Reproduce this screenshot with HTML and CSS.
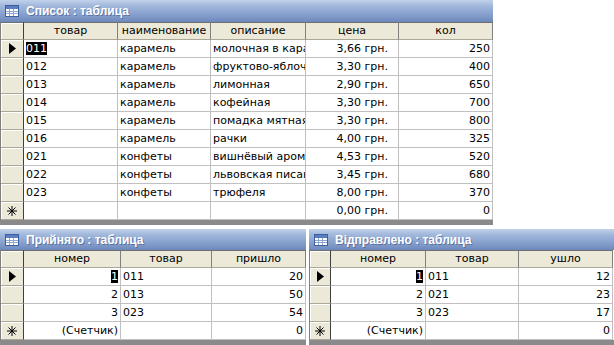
FILE: index.html
```html
<!DOCTYPE html>
<html lang="ru">
<head>
    <meta charset="UTF-8">
    <title>Таблицы</title>
    <link rel="stylesheet" href="styles.css">
</head>
<body>
    <div class="desk">
        <!-- Список -->
        <div class="win win-main">
            <div class="titlebar">
                <svg class="ticon" width="14" height="12" viewBox="0 0 14 12">
                    <rect x="0.5" y="0.5" width="13" height="11" fill="#fff" stroke="#3b5fa0"/>
                    <rect x="1" y="1" width="12" height="3" fill="#5a7fc0"/>
                    <path d="M1 6.5H13M1 8.5H13M4.5 4V11M8.5 4V11" stroke="#8ea6d0" stroke-width="1"/>
                </svg>
                <span>Список : таблица</span>
            </div>
            <div class="grid">
                <div class="row head">
                    <div class="sel"></div>
                    <div class="c">товар</div>
                    <div class="c">наименование</div>
                    <div class="c">описание</div>
                    <div class="c">цена</div>
                    <div class="c">кол</div>
                </div>
                <div class="row">
                    <div class="sel"><svg width="7" height="11" viewBox="0 0 7 11"><polygon points="0,0 7,5.5 0,11" fill="#000"/></svg></div>
                    <div class="c"><span class="hl">011</span></div>
                    <div class="c">карамель</div>
                    <div class="c">молочная в карамели</div>
                    <div class="c money">3,66 грн.</div>
                    <div class="c num">250</div>
                </div>
                <div class="row">
                    <div class="sel"></div>
                    <div class="c">012</div>
                    <div class="c">карамель</div>
                    <div class="c">фруктово-яблочная</div>
                    <div class="c money">3,30 грн.</div>
                    <div class="c num">400</div>
                </div>
                <div class="row">
                    <div class="sel"></div>
                    <div class="c">013</div>
                    <div class="c">карамель</div>
                    <div class="c">лимонная</div>
                    <div class="c money">2,90 грн.</div>
                    <div class="c num">650</div>
                </div>
                <div class="row">
                    <div class="sel"></div>
                    <div class="c">014</div>
                    <div class="c">карамель</div>
                    <div class="c">кофейная</div>
                    <div class="c money">3,30 грн.</div>
                    <div class="c num">700</div>
                </div>
                <div class="row">
                    <div class="sel"></div>
                    <div class="c">015</div>
                    <div class="c">карамель</div>
                    <div class="c">помадка мятная</div>
                    <div class="c money">3,30 грн.</div>
                    <div class="c num">800</div>
                </div>
                <div class="row">
                    <div class="sel"></div>
                    <div class="c">016</div>
                    <div class="c">карамель</div>
                    <div class="c">рачки</div>
                    <div class="c money">4,00 грн.</div>
                    <div class="c num">325</div>
                </div>
                <div class="row">
                    <div class="sel"></div>
                    <div class="c">021</div>
                    <div class="c">конфеты</div>
                    <div class="c">вишнёвый аромат</div>
                    <div class="c money">4,53 грн.</div>
                    <div class="c num">520</div>
                </div>
                <div class="row">
                    <div class="sel"></div>
                    <div class="c">022</div>
                    <div class="c">конфеты</div>
                    <div class="c">львовская писанка</div>
                    <div class="c money">3,45 грн.</div>
                    <div class="c num">680</div>
                </div>
                <div class="row">
                    <div class="sel"></div>
                    <div class="c">023</div>
                    <div class="c">конфеты</div>
                    <div class="c">трюфеля</div>
                    <div class="c money">8,00 грн.</div>
                    <div class="c num">370</div>
                </div>
                <div class="row">
                    <div class="sel"><svg width="10" height="10" viewBox="0 0 10 10"><path d="M5 0V10M0 5H10M1.5 1.5L8.5 8.5M8.5 1.5L1.5 8.5" stroke="#000" stroke-width="1"/></svg></div>
                    <div class="c"></div>
                    <div class="c"></div>
                    <div class="c"></div>
                    <div class="c money">0,00 грн.</div>
                    <div class="c num">0</div>
                </div>
            </div>
            <div class="frame-bottom"></div>
        </div>

        <div class="bottom">
            <!-- Прийнято -->
            <div class="win win-small win-in">
                <div class="titlebar">
                    <svg class="ticon" width="14" height="12" viewBox="0 0 14 12">
                        <rect x="0.5" y="0.5" width="13" height="11" fill="#fff" stroke="#3b5fa0"/>
                        <rect x="1" y="1" width="12" height="3" fill="#5a7fc0"/>
                        <path d="M1 6.5H13M1 8.5H13M4.5 4V11M8.5 4V11" stroke="#8ea6d0" stroke-width="1"/>
                    </svg>
                    <span>Прийнято : таблица</span>
                </div>
                <div class="grid">
                    <div class="row head">
                        <div class="sel"></div>
                        <div class="c">номер</div>
                        <div class="c">товар</div>
                        <div class="c">пришло</div>
                    </div>
                    <div class="row">
                        <div class="sel"><svg width="7" height="11" viewBox="0 0 7 11"><polygon points="0,0 7,5.5 0,11" fill="#000"/></svg></div>
                        <div class="c num"><span class="hl">1</span></div>
                        <div class="c">011</div>
                        <div class="c num">20</div>
                    </div>
                    <div class="row">
                        <div class="sel"></div>
                        <div class="c num">2</div>
                        <div class="c">013</div>
                        <div class="c num">50</div>
                    </div>
                    <div class="row">
                        <div class="sel"></div>
                        <div class="c num">3</div>
                        <div class="c">023</div>
                        <div class="c num">54</div>
                    </div>
                    <div class="row">
                        <div class="sel"><svg width="10" height="10" viewBox="0 0 10 10"><path d="M5 0V10M0 5H10M1.5 1.5L8.5 8.5M8.5 1.5L1.5 8.5" stroke="#000" stroke-width="1"/></svg></div>
                        <div class="c num">(Счетчик)</div>
                        <div class="c"></div>
                        <div class="c num">0</div>
                    </div>
                </div>
                <div class="frame-bottom"></div>
            </div>

            <!-- Відправлено -->
            <div class="win win-small win-out">
                <div class="titlebar">
                    <svg class="ticon" width="14" height="12" viewBox="0 0 14 12">
                        <rect x="0.5" y="0.5" width="13" height="11" fill="#fff" stroke="#3b5fa0"/>
                        <rect x="1" y="1" width="12" height="3" fill="#5a7fc0"/>
                        <path d="M1 6.5H13M1 8.5H13M4.5 4V11M8.5 4V11" stroke="#8ea6d0" stroke-width="1"/>
                    </svg>
                    <span>Відправлено : таблица</span>
                </div>
                <div class="grid">
                    <div class="row head">
                        <div class="sel"></div>
                        <div class="c">номер</div>
                        <div class="c">товар</div>
                        <div class="c">ушло</div>
                    </div>
                    <div class="row">
                        <div class="sel"><svg width="7" height="11" viewBox="0 0 7 11"><polygon points="0,0 7,5.5 0,11" fill="#000"/></svg></div>
                        <div class="c num"><span class="hl">1</span></div>
                        <div class="c">011</div>
                        <div class="c num">12</div>
                    </div>
                    <div class="row">
                        <div class="sel"></div>
                        <div class="c num">2</div>
                        <div class="c">021</div>
                        <div class="c num">23</div>
                    </div>
                    <div class="row">
                        <div class="sel"></div>
                        <div class="c num">3</div>
                        <div class="c">023</div>
                        <div class="c num">17</div>
                    </div>
                    <div class="row">
                        <div class="sel"><svg width="10" height="10" viewBox="0 0 10 10"><path d="M5 0V10M0 5H10M1.5 1.5L8.5 8.5M8.5 1.5L1.5 8.5" stroke="#000" stroke-width="1"/></svg></div>
                        <div class="c num">(Счетчик)</div>
                        <div class="c"></div>
                        <div class="c num">0</div>
                    </div>
                </div>
                <div class="frame-bottom"></div>
            </div>
        </div>
    </div>
</body>
</html>
```

FILE: styles.css
```css
* {
    margin: 0;
    padding: 0;
    box-sizing: border-box;
}

body {
    background: #ffffff;
    font-family: 'DejaVu Sans', Verdana, sans-serif;
    font-size: 11px;
    color: #000000;
    width: 614px;
    height: 345px;
    overflow: hidden;
}

.desk {
    display: flex;
    flex-direction: column;
}

.win {
    display: flex;
    flex-direction: column;
    background: #ffffff;
}

.win-main {
    width: 493px;
}

.bottom {
    display: flex;
    gap: 3px;
    margin-top: 4px;
}

.win-in {
    width: 306px;
}

.win-out {
    width: 305px;
}

/* Title bar */
.titlebar {
    height: 22px;
    display: flex;
    align-items: center;
    gap: 7px;
    padding-left: 5px;
    background: linear-gradient(to bottom, #c1d1ea 0%, #a3b9dc 25%, #8aa3cf 60%, #7893c4 85%, #6c88bb 100%);
    color: #ffffff;
    font-family: 'Liberation Sans', Arial, sans-serif;
    font-weight: bold;
    font-size: 12px;
    text-shadow: 1px 1px 0 rgba(40, 60, 110, 0.45);
}

.win-small .titlebar {
    height: 21px;
}

.ticon {
    flex: none;
}

/* Datasheet */
.grid {
    border-left: 1px solid #808080;
}

.row {
    display: grid;
    height: 18px;
}

.win-main .row {
    grid-template-columns: 23px 94px 93px 95px 93px 94px;
}

.win-in .row {
    grid-template-columns: 23px 97px 91px 94px;
}

.win-out .row {
    grid-template-columns: 21px 95px 93px 94px;
}

.c {
    height: 18px;
    line-height: 17px;
    padding: 0 2px;
    border-right: 1px solid #c0c0c0;
    border-bottom: 1px solid #c0c0c0;
    white-space: nowrap;
    overflow: hidden;
}

.sel {
    height: 18px;
    background: #ece9d8;
    border-right: 1px solid #404040;
    border-bottom: 1px solid #aca899;
    box-shadow: inset 1px 1px 0 #ffffff;
    display: flex;
    align-items: center;
    justify-content: center;
}

.head .c {
    background: #ece9d8;
    text-align: center;
    border-top: 1px solid #6f6f6f;
    border-right: 1px solid #808080;
    border-bottom: 1px solid #aca899;
    line-height: 15px;
}

.head .sel {
    border-top: 1px solid #6f6f6f;
}

.num {
    text-align: right;
}

.money {
    text-align: right;
    padding-right: 10px;
}

.hl {
    background: #000000;
    color: #ffffff;
}

.frame-bottom {
    height: 5px;
    background: #8a8a8a;
}
```
